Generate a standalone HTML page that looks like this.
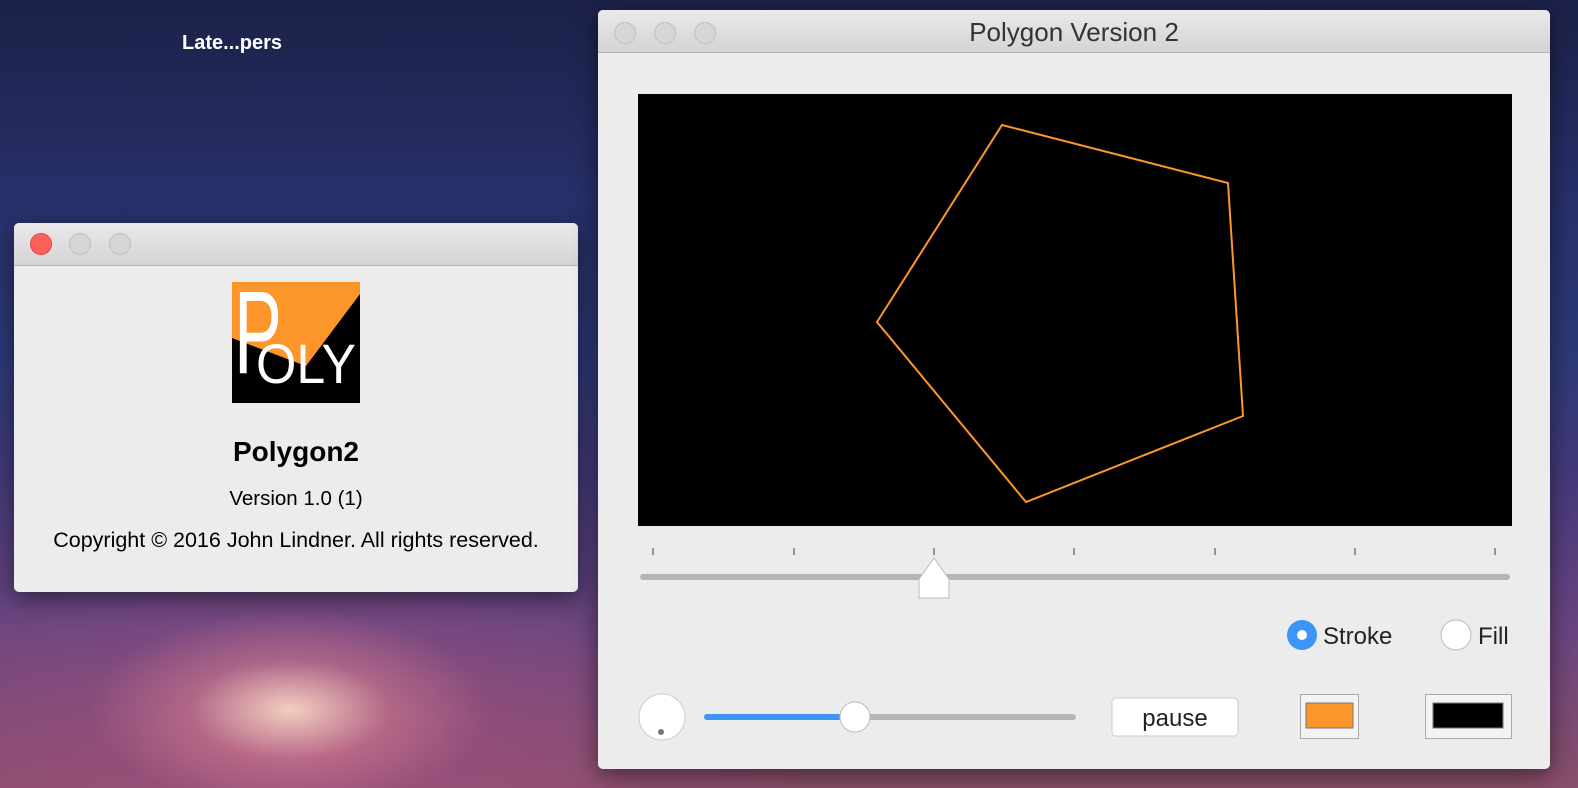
<!DOCTYPE html>
<html><head><style>
*{margin:0;padding:0;box-sizing:border-box}
body{width:1578px;height:788px;overflow:hidden;position:relative;font-family:"Liberation Sans",sans-serif;
background:
radial-gradient(ellipse 200px 100px at 290px 710px,rgba(255,220,200,.9),rgba(230,140,150,.4) 50%,transparent 100%),
radial-gradient(ellipse 500px 200px at 300px 760px,rgba(160,80,130,.8),transparent),
linear-gradient(180deg,#1c2148 0%,#27306a 25%,#2c3a78 45%,#44397a 60%,#6a4580 80%,#8a4f6a 100%);}
.win{position:absolute;background:#ececec;border-radius:5px;box-shadow:0 6px 24px rgba(0,0,0,.5);overflow:hidden}
.tb{height:43px;background:linear-gradient(#ebe9eb,#d5d3d6);border-bottom:1px solid #b5b5b5;position:relative}
.dot{position:absolute;top:12px;width:22px;height:22px;border-radius:50%;background:#d6d6d6;border:1px solid #bdbdbd}
</style></head><body>
<div style="position:absolute;left:182px;top:32px;color:#fff;font-weight:bold;font-size:20px">Late...pers</div>

<div class="win" style="left:14px;top:223px;width:564px;height:369px">
<div class="tb" style="height:43px">
<div class="dot" style="left:16px;top:10px;background:#fc605c;border-color:#e0443e"></div>
<div class="dot" style="left:55px;top:10px"></div>
<div class="dot" style="left:95px;top:10px"></div>
</div>
<svg style="position:absolute;left:218px;top:59px" width="128" height="121">
<rect width="128" height="121" fill="#000"/>
<polygon points="0,0 128,0 128,12 74,84 0,56" fill="#fc952a"/>
<text x="2" y="91" font-family="Liberation Sans" font-size="118" fill="#fff" textLength="48" lengthAdjust="spacingAndGlyphs">P</text>
<text x="24" y="101" font-family="Liberation Sans" font-size="56" fill="#fff" textLength="100" lengthAdjust="spacingAndGlyphs">OLY</text>
</svg>
<div style="position:absolute;top:213px;width:100%;text-align:center;font-weight:bold;font-size:28px">Polygon2</div>
<div style="position:absolute;top:264px;width:100%;text-align:center;font-size:20.5px">Version 1.0 (1)</div>
<div style="position:absolute;top:305px;width:100%;text-align:center;font-size:21.5px">Copyright © 2016 John Lindner. All rights reserved.</div>
</div>

<div class="win" style="left:598px;top:10px;width:952px;height:759px">
<div class="tb">
<div class="dot" style="left:16px"></div><div class="dot" style="left:56px"></div><div class="dot" style="left:96px"></div>
<div style="position:absolute;width:100%;top:7px;text-align:center;font-size:26px;color:#333">Polygon Version 2</div>
</div>
<svg style="position:absolute;left:40px;top:84px" width="874" height="432">
<rect width="874" height="432" fill="#000"/>
<polygon points="364,31 590,89 605,322 388,408 239,228" fill="none" stroke="#fc952a" stroke-width="2"/>
</svg>
<svg style="position:absolute;left:0;top:530px" width="952" height="229">
<g stroke="#777" stroke-width="1.5">
<line x1="55" y1="8" x2="55" y2="15"/><line x1="196" y1="8" x2="196" y2="15"/><line x1="336" y1="8" x2="336" y2="15"/><line x1="476" y1="8" x2="476" y2="15"/><line x1="617" y1="8" x2="617" y2="15"/><line x1="757" y1="8" x2="757" y2="15"/><line x1="897" y1="8" x2="897" y2="15"/></g>
<rect x="42" y="34" width="870" height="6" rx="3" fill="#b5b5b5"/>
<path d="M321,58 V39 L336,18 L351,39 V58 Z" fill="#fff" stroke="#bbb"/>
<circle cx="704" cy="95" r="15" fill="#3d95f7"/>
<circle cx="704" cy="95" r="5" fill="#fff"/>
<text x="725" y="104" font-size="24" font-family="Liberation Sans" fill="#222">Stroke</text>
<circle cx="858" cy="95" r="15" fill="#fff" stroke="#bbb"/>
<text x="880" y="104" font-size="24" font-family="Liberation Sans" fill="#222">Fill</text>
<ellipse cx="64" cy="177" rx="23" ry="23" fill="#fff" stroke="#ccc"/>
<circle cx="63" cy="192" r="3" fill="#777"/>
<rect x="106" y="174" width="372" height="6" rx="3" fill="#b5b5b5"/>
<rect x="106" y="174" width="150" height="6" rx="3" fill="#3d95f7"/>
<circle cx="257" cy="177" r="15" fill="#fff" stroke="#bbb"/>
<rect x="514" y="158" width="126" height="38" rx="4" fill="#fff" stroke="#ccc"/>
<text x="577" y="186" text-anchor="middle" font-size="24" font-family="Liberation Sans" fill="#222">pause</text>
<rect x="702.5" y="154.5" width="58" height="44" fill="#f3f3f3" stroke="#aaa"/>
<rect x="708" y="163" width="47" height="25" fill="#fc952a" stroke="#777"/>
<rect x="827.5" y="154.5" width="86" height="44" fill="#f3f3f3" stroke="#aaa"/>
<rect x="835" y="163" width="70" height="25" fill="#000" stroke="#777"/>
</svg>
</div>
</body></html>
